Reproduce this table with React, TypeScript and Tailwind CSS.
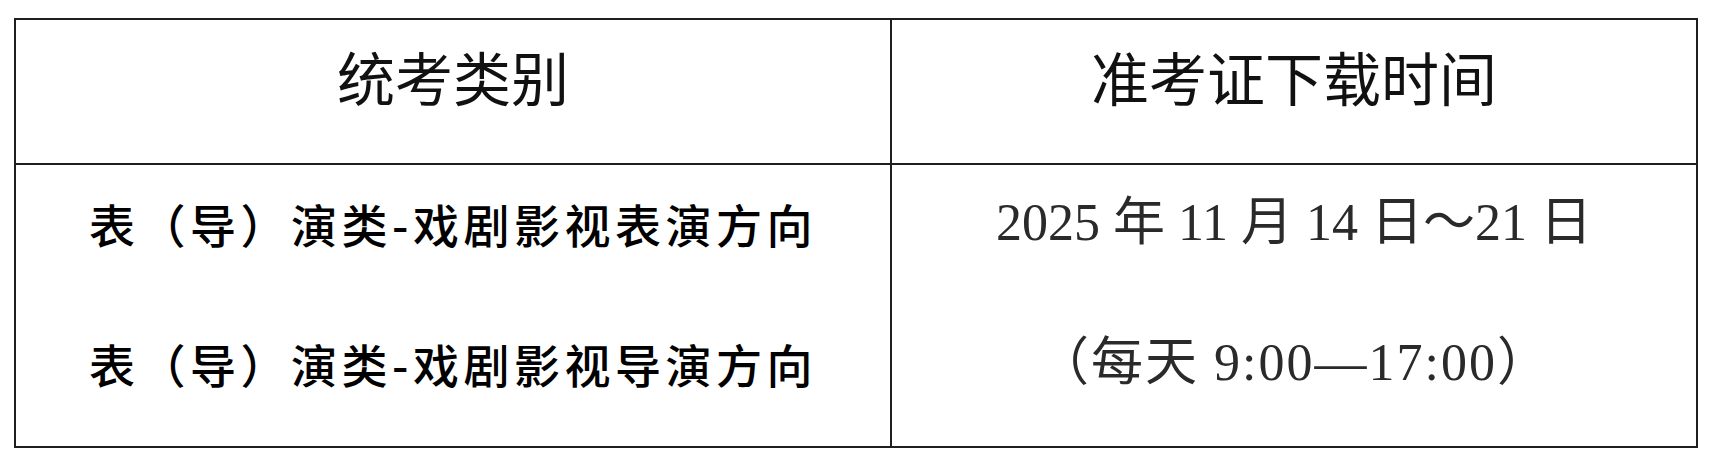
import React from "react"

const sans = "font-['Noto_Sans_CJK_SC','Noto_Sans',sans-serif]"
const serif = "font-['Liberation_Serif','Noto_Sans_CJK_SC',serif]"

const categories = [
  "表（导）演类-戏剧影视表演方向",
  "表（导）演类-戏剧影视导演方向",
]

export default function App() {
  return (
    <div className="min-h-screen bg-white pl-[14px] pt-[18px]">
      <div className="grid h-[430px] w-[1684px] grid-cols-[876px_1fr] grid-rows-[145px_1fr] border-2 border-[#1f1f1f]">
        {/* header */}
        <div className={`border-b-2 border-r-2 border-[#1f1f1f] pt-[27px] text-center text-[58px] leading-[58px] text-[#111] ${sans}`}>
          统考类别
        </div>
        <div className={`border-b-2 border-[#1f1f1f] pt-[27px] text-center text-[58px] leading-[58px] text-[#111] ${sans}`}>
          准考证下载时间
        </div>

        {/* body */}
        <div className={`flex flex-col items-center gap-[80px] border-r-2 border-[#1f1f1f] pt-[28px] ${sans}`}>
          {categories.map((c) => (
            <p key={c} className="text-[46px] font-medium leading-[60px] tracking-[4.5px] text-black">
              {c}
            </p>
          ))}
        </div>
        <div className={`flex flex-col items-center gap-[80px] pt-[28px] text-[52px] leading-[60px] text-[#2a2a2a] ${serif}`}>
          <p>2025 年 11 月 14 日～21 日</p>
          <p className="tracking-[2px]">（每天 9:00—17:00）</p>
        </div>
      </div>
    </div>
  )
}
